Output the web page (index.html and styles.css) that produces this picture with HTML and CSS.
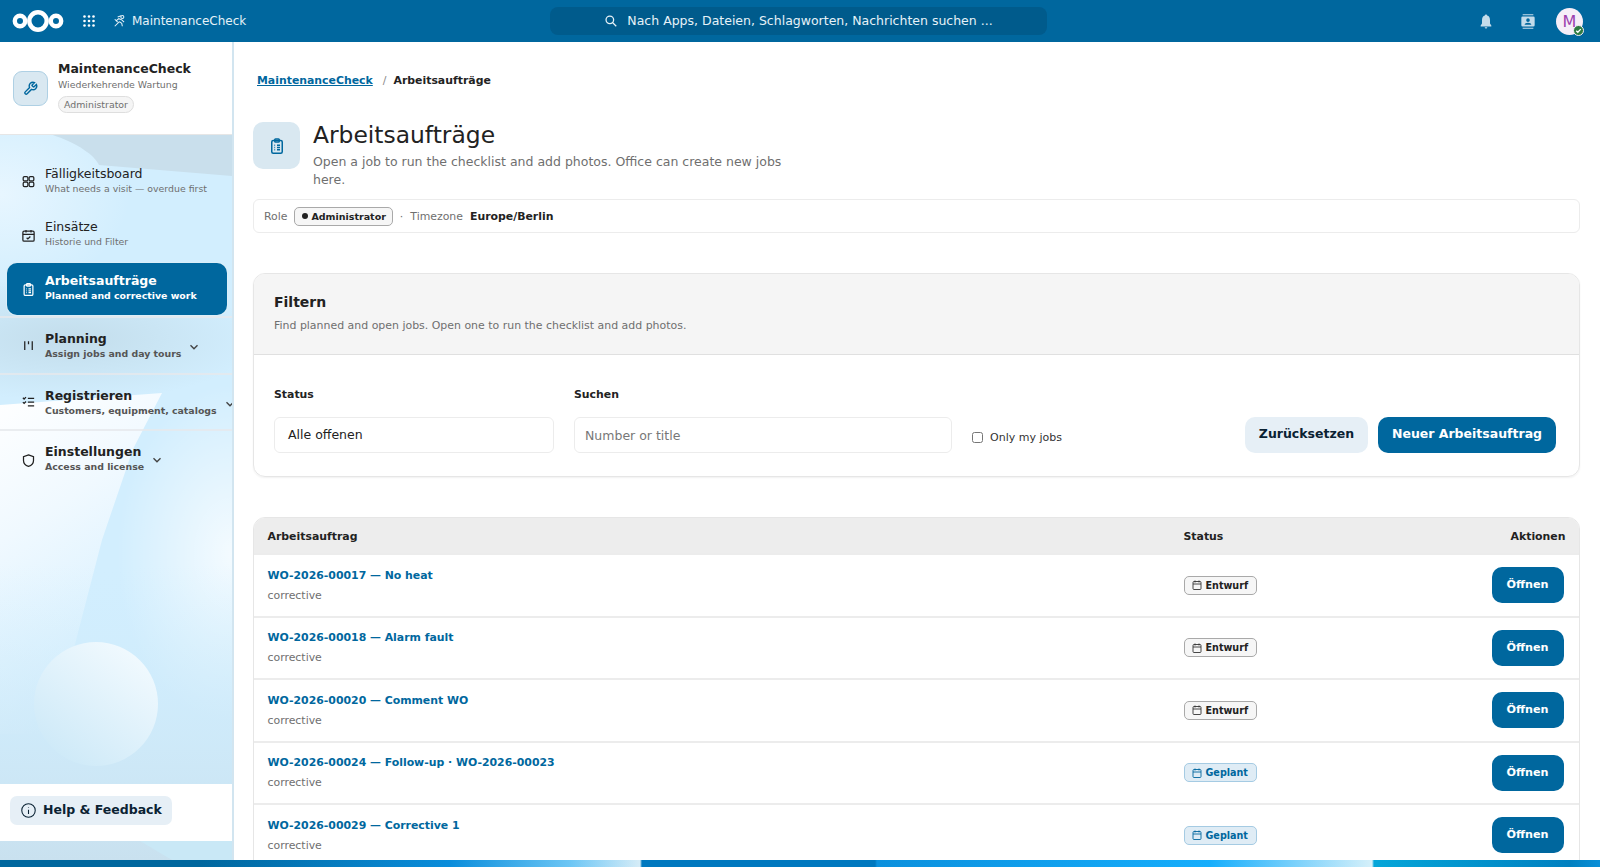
FILE: index.html
```html
<!DOCTYPE html>
<html lang="de">
<head>
  <meta charset="UTF-8">
  <meta name="viewport" content="width=device-width, initial-scale=1.0">
  <title>Arbeitsaufträge - MaintenanceCheck</title>
  <link rel="stylesheet" href="styles.css">
</head>
<body>

  <!-- shared icons -->
  <svg class="sprite" aria-hidden="true">
    <symbol id="i-cal" viewBox="0 0 24 24">
      <rect x="4" y="5" width="16" height="16" rx="2"/>
      <path d="M8 3v4M16 3v4M4 10h16"/>
    </symbol>
    <symbol id="i-clip" viewBox="0 0 24 24">
      <rect x="5" y="4.5" width="14" height="17" rx="2"/>
      <rect x="9" y="2.5" width="6" height="4" rx="1"/>
      <path d="M8.5 11h1M12 11h4M8.5 14h1M12 14h4M8.5 17h1M12 17h4"/>
    </symbol>
    <symbol id="i-chev" viewBox="0 0 24 24">
      <path d="M6 9l6 6 6-6"/>
    </symbol>
  </svg>

  <header class="topbar">
    <div class="topbar-left">
      <svg class="logo" viewBox="0 0 52 24">
        <circle cx="8" cy="12" r="5.2"/>
        <circle cx="26" cy="12" r="8.7"/>
        <circle cx="44" cy="12" r="5.2"/>
      </svg>
      <svg class="apps" viewBox="0 0 12 12">
        <circle cx="1.5" cy="1.5" r="1.3"/><circle cx="6" cy="1.5" r="1.3"/><circle cx="10.5" cy="1.5" r="1.3"/>
        <circle cx="1.5" cy="6" r="1.3"/><circle cx="6" cy="6" r="1.3"/><circle cx="10.5" cy="6" r="1.3"/>
        <circle cx="1.5" cy="10.5" r="1.3"/><circle cx="6" cy="10.5" r="1.3"/><circle cx="10.5" cy="10.5" r="1.3"/>
      </svg>
      <div class="app-name">
        <svg class="app-icon" viewBox="0 0 24 24">
          <circle cx="16" cy="5" r="2.6"/>
          <path d="M3 21l8-8M5 12l5-4 5 2 4 4M11 13l4 3 1 5M14 3L8 5M3 9l5 5"/>
        </svg>
        <span>MaintenanceCheck</span>
      </div>
    </div>
    <div class="search">
      <svg class="search-icon" viewBox="0 0 24 24">
        <circle cx="10" cy="10" r="6.5"/>
        <path d="M15 15l6 6"/>
      </svg>
      <span>Nach Apps, Dateien, Schlagworten, Nachrichten suchen ...</span>
    </div>
    <div class="topbar-right">
      <svg class="top-icon" viewBox="0 0 24 24">
        <path d="M12 1.500c-1 0-1.600.7-1.700 1.600C7.500 3.900 6 6.500 6 10v5l-2 3v1.500h16V18l-2-3v-5c0-3.500-1.500-6.100-4.300-6.900C13.600 2.200 13 1.500 12 1.500z"/>
        <path d="M10 20.500a2 2 0 0 0 4 0z"/>
      </svg>
      <svg class="top-icon" viewBox="0 0 24 24">
        <path d="M4 1h16v1.800H4zM4 21.200h16V23H4z"/>
        <path fill-rule="evenodd" d="M4 4.500h16a2 2 0 0 1 2 2v11a2 2 0 0 1-2 2H4a2 2 0 0 1-2-2v-11a2 2 0 0 1 2-2zm8 2.800a2.700 2.700 0 1 0 0 5.400 2.700 2.700 0 0 0 0-5.400zM7 17h10c0-2-2.200-3.200-5-3.200S7 15 7 17z"/>
      </svg>
      <div class="avatar">
        M
        <span class="status-dot">
          <svg viewBox="0 0 12 12"><path d="M3 6.200l2.100 2.100L9 4.200"/></svg>
        </span>
      </div>
    </div>
  </header>

  <div class="app">
    <aside class="sidebar">
      <!-- background picture behind the nav -->
      <svg class="side-bg" viewBox="0 0 232 726" preserveAspectRatio="none">
        <defs>
          <linearGradient id="sheet" x1="0" y1="0" x2="0.3" y2="1">
            <stop offset="0" stop-color="#ffffff"/>
            <stop offset="0.4" stop-color="#f0f9ff"/>
            <stop offset="1" stop-color="#d2eefe"/>
          </linearGradient>
          <linearGradient id="ball" x1="0.2" y1="0.9" x2="0.8" y2="0.1">
            <stop offset="0" stop-color="#cfeaf8"/>
            <stop offset="1" stop-color="#f0f9fe"/>
          </linearGradient>
          <linearGradient id="low" x1="0" y1="0" x2="0" y2="1">
            <stop offset="0" stop-color="#cfeefe" stop-opacity="0"/>
            <stop offset="1" stop-color="#c9e1ef"/>
          </linearGradient>
          <radialGradient id="shade">
            <stop offset="0" stop-color="#c2dcea" stop-opacity="0.95"/>
            <stop offset="1" stop-color="#c2dcea" stop-opacity="0"/>
          </radialGradient>
          <radialGradient id="blob">
            <stop offset="0" stop-color="#eaf7ff" stop-opacity="0.9"/>
            <stop offset="1" stop-color="#eaf7ff" stop-opacity="0"/>
          </radialGradient>
          <radialGradient id="glow">
            <stop offset="0" stop-color="#ffffff" stop-opacity="0.75"/>
            <stop offset="1" stop-color="#ffffff" stop-opacity="0"/>
          </radialGradient>
        </defs>
        <rect width="232" height="726" fill="#d2eefe"/>
        <ellipse cx="0" cy="60" rx="130" ry="100" fill="url(#blob)"/>
        <path d="M50 0C80 10 95 22 99 31L232 42V0z" fill="#c9dfec"/>
        <ellipse cx="70" cy="205" rx="190" ry="62" fill="url(#shade)"/>
        <ellipse cx="232" cy="420" rx="115" ry="170" fill="url(#glow)"/>
        <path d="M0 271L162 259 133 315 102 406 73 518 55 600H0z" fill="url(#sheet)"/>
        <rect y="430" width="232" height="296" fill="url(#low)"/>
        <circle cx="96" cy="570" r="62" fill="url(#ball)"/>
        <path d="M140 707H232V726H172z" fill="#c9e8f6"/>
      </svg>

      <div class="side-head">
        <div class="side-logo">
          <svg viewBox="0 0 24 24">
            <path d="M14.700 6.300a1 1 0 0 0 0 1.400l1.600 1.600a1 1 0 0 0 1.400 0l3.770-3.770a6 6 0 0 1-7.940 7.940l-6.910 6.910a2.120 2.120 0 0 1-3-3l6.910-6.910a6 6 0 0 1 7.940-7.940l-3.760 3.760z"/>
          </svg>
        </div>
        <div class="side-info">
          <strong>MaintenanceCheck</strong>
          <span>Wiederkehrende Wartung</span>
          <em class="role-pill">Administrator</em>
        </div>
      </div>

      <nav class="side-nav">
        <a class="nav-item low" href="#">
          <svg class="nav-icon" viewBox="0 0 24 24">
            <rect x="3.500" y="4" width="7.500" height="7" rx="2"/><rect x="13" y="4" width="7.500" height="7" rx="2"/>
            <rect x="3.500" y="13" width="7.500" height="7" rx="2"/><rect x="13" y="13" width="7.500" height="7" rx="2"/>
          </svg>
          <span class="nav-text"><b>Fälligkeitsboard</b><small>What needs a visit — overdue first</small></span>
        </a>
        <a class="nav-item low" href="#">
          <svg class="nav-icon" viewBox="0 0 24 24">
            <rect x="3" y="5" width="18" height="16" rx="2"/>
            <path d="M8 3v4M16 3v4M3 10h18M9 15.500l2 2 4-4"/>
          </svg>
          <span class="nav-text"><b>Einsätze</b><small>Historie und Filter</small></span>
        </a>
        <a class="nav-item active" href="#">
          <svg class="nav-icon"><use href="#i-clip"/></svg>
          <span class="nav-text"><b>Arbeitsaufträge</b><small>Planned and corrective work</small></span>
        </a>
        <a class="nav-item group" href="#">
          <svg class="nav-icon" viewBox="0 0 24 24"><path d="M6 5v14M12 5v5M18 5v14"/></svg>
          <span class="nav-text"><b>Planning</b><small>Assign jobs and day tours</small></span>
          <svg class="chev"><use href="#i-chev"/></svg>
        </a>
        <a class="nav-item group" href="#">
          <svg class="nav-icon" viewBox="0 0 24 24"><path d="M3 6l2 2 3-3M3 13l2 2 3-3M11 7h10M11 13h10M11 19h10"/></svg>
          <span class="nav-text"><b>Registrieren</b><small>Customers, equipment, catalogs</small></span>
          <svg class="chev"><use href="#i-chev"/></svg>
        </a>
        <a class="nav-item group low" href="#">
          <svg class="nav-icon" viewBox="0 0 24 24"><path d="M12 3l8 3v6c0 5-3.500 8-8 9.500C7.500 20 4 17 4 12V6z"/></svg>
          <span class="nav-text"><b>Einstellungen</b><small>Access and license</small></span>
          <svg class="chev"><use href="#i-chev"/></svg>
        </a>
      </nav>

      <div class="side-foot">
        <a class="help-btn" href="#">
          <svg viewBox="0 0 24 24"><circle cx="12" cy="12" r="9.500"/><path d="M12 11v6M12 7.500v.5"/></svg>
          <span>Help &amp; Feedback</span>
        </a>
      </div>
    </aside>

    <main class="content">
      <div class="crumbs">
        <a href="#">MaintenanceCheck</a>
        <span class="sep">/</span>
        <strong>Arbeitsaufträge</strong>
      </div>

      <div class="page-head">
        <div class="page-icon"><svg><use href="#i-clip"/></svg></div>
        <div class="page-title">
          <h1>Arbeitsaufträge</h1>
          <p>Open a job to run the checklist and add photos. Office can create new jobs here.</p>
        </div>
      </div>

      <div class="context-bar">
        <span class="muted">Role</span>
        <span class="role-badge"><i></i>Administrator</span>
        <span class="muted dot">·</span>
        <span class="muted">Timezone</span>
        <strong>Europe/Berlin</strong>
      </div>

      <section class="card">
        <div class="card-head">
          <h2>Filtern</h2>
          <p>Find planned and open jobs. Open one to run the checklist and add photos.</p>
        </div>
        <form class="filters">
          <div class="field field-status">
            <label for="status">Status</label>
            <div class="select" id="status">Alle offenen</div>
          </div>
          <div class="field field-search">
            <label for="search">Suchen</label>
            <input id="search" type="text" placeholder="Number or title">
          </div>
          <label class="check"><input type="checkbox"> Only my jobs</label>
          <div class="filter-btns">
            <button type="button" class="btn btn-soft">Zurücksetzen</button>
            <button type="button" class="btn btn-main">Neuer Arbeitsauftrag</button>
          </div>
        </form>
      </section>

      <section class="jobs">
        <div class="row row-head">
          <span>Arbeitsauftrag</span>
          <span>Status</span>
          <span class="right">Aktionen</span>
        </div>
        <div class="row">
          <div class="job"><a href="#">WO-2026-00017 — No heat</a><span>corrective</span></div>
          <div><span class="badge"><svg><use href="#i-cal"/></svg>Entwurf</span></div>
          <div class="right"><a class="open-btn" href="#">Öffnen</a></div>
        </div>
        <div class="row">
          <div class="job"><a href="#">WO-2026-00018 — Alarm fault</a><span>corrective</span></div>
          <div><span class="badge"><svg><use href="#i-cal"/></svg>Entwurf</span></div>
          <div class="right"><a class="open-btn" href="#">Öffnen</a></div>
        </div>
        <div class="row">
          <div class="job"><a href="#">WO-2026-00020 — Comment WO</a><span>corrective</span></div>
          <div><span class="badge"><svg><use href="#i-cal"/></svg>Entwurf</span></div>
          <div class="right"><a class="open-btn" href="#">Öffnen</a></div>
        </div>
        <div class="row">
          <div class="job"><a href="#">WO-2026-00024 — Follow-up · WO-2026-00023</a><span>corrective</span></div>
          <div><span class="badge planned"><svg><use href="#i-cal"/></svg>Geplant</span></div>
          <div class="right"><a class="open-btn" href="#">Öffnen</a></div>
        </div>
        <div class="row">
          <div class="job"><a href="#">WO-2026-00029 — Corrective 1</a><span>corrective</span></div>
          <div><span class="badge planned"><svg><use href="#i-cal"/></svg>Geplant</span></div>
          <div class="right"><a class="open-btn" href="#">Öffnen</a></div>
        </div>
      </section>
    </main>
  </div>

  <div class="strip"></div>

</body>
</html>
```

FILE: styles.css
```css
* {
  box-sizing: border-box;
}

body {
  margin: 0;
  height: 100vh;
  overflow: hidden;
  display: flex;
  flex-direction: column;
  font-family: "DejaVu Sans", sans-serif;
  color: #222222;
  background: #ffffff;
}

a {
  text-decoration: none;
  color: inherit;
}

.sprite {
  display: none;
}

/* Top bar */
.topbar {
  flex: 0 0 42px;
  display: grid;
  grid-template-columns: 1fr 497px 1fr;
  align-items: center;
  background: #00679e;
  color: #ffffff;
  padding: 0 15px 0 12px;
}

.topbar-left {
  display: flex;
  align-items: center;
}

.logo {
  width: 52px;
  height: 24px;
  fill: none;
  stroke: #ffffff;
  stroke-width: 4.4;
}

.apps {
  width: 12px;
  height: 12px;
  margin-left: 19px;
  fill: #ffffff;
}

.app-name {
  display: flex;
  align-items: center;
  gap: 5px;
  margin-left: 18px;
  font-size: 12px;
  color: #e6f2f8;
}

.app-icon {
  width: 14px;
  height: 14px;
  fill: none;
  stroke: #e6f2f8;
  stroke-width: 1.8;
}

.search {
  height: 28px;
  border-radius: 8px;
  background: #005b8c;
  display: flex;
  align-items: center;
  justify-content: center;
  gap: 9px;
  font-size: 12.5px;
  color: #e6f2f8;
}

.search span {
  margin-top: -1px;
}

.search-icon {
  width: 14px;
  height: 14px;
  fill: none;
  stroke: #e6f2f8;
  stroke-width: 2.2;
}

.topbar-right {
  display: flex;
  align-items: center;
  justify-content: flex-end;
  gap: 26px;
  padding-right: 2px;
}

.top-icon {
  width: 16px;
  height: 17px;
  fill: #c4dcea;
}

.avatar {
  position: relative;
  width: 27px;
  height: 27px;
  margin-left: -6px;
  border-radius: 50%;
  background: #f6eef8;
  color: #9c3fae;
  font-size: 16px;
  line-height: 27px;
  text-align: center;
}

.status-dot {
  position: absolute;
  right: -1px;
  bottom: -1px;
  width: 11px;
  height: 11px;
  border-radius: 50%;
  background: #2d7b41;
  border: 1px solid #f6eef8;
}

.status-dot svg {
  display: block;
  width: 9px;
  height: 9px;
  fill: none;
  stroke: #ffffff;
  stroke-width: 1.8;
}

/* Page body */
.app {
  flex: 1;
  min-height: 0;
  display: flex;
}

.sidebar {
  position: relative;
  flex: 0 0 234px;
  display: flex;
  flex-direction: column;
  border-right: 2px solid #d2e5f0;
  overflow: hidden;
}

.side-bg {
  position: absolute;
  left: 0;
  top: 92px;
  width: 232px;
  height: 726px;
}

.side-head {
  position: relative;
  flex: 0 0 93px;
  background: #ffffff;
  border-bottom: 1px solid #e6e6e6;
  display: flex;
  align-items: flex-start;
  padding: 18px 0 0 13px;
  gap: 10px;
}

.side-logo {
  flex: 0 0 35px;
  height: 35px;
  margin-top: 11px;
  border-radius: 9px;
  background: #d9e8f1;
  border: 1px solid #aed0e4;
  display: flex;
  align-items: center;
  justify-content: center;
}

.side-logo svg {
  width: 15px;
  height: 15px;
  fill: none;
  stroke: #00679e;
  stroke-width: 2.2;
}

.side-info {
  display: flex;
  flex-direction: column;
  align-items: flex-start;
}

.side-info strong {
  font-size: 12.5px;
  line-height: 17px;
}

.side-info span {
  font-size: 9.4px;
  line-height: 14px;
  margin-top: 1px;
  color: #6f6f6f;
}

.role-pill {
  margin-top: 4px;
  padding: 0 5px;
  height: 17px;
  border: 1px solid #dedede;
  border-radius: 9px;
  background: #f5f5f5;
  font-size: 9.4px;
  line-height: 15px;
  font-style: normal;
  color: #6f6f6f;
}

.side-nav {
  position: relative;
  flex: 1;
  padding-top: 18px;
  display: flex;
  flex-direction: column;
}

.nav-item {
  display: flex;
  align-items: center;
  height: 53.5px;
  padding-left: 21px;
  color: #222222;
}

.nav-icon {
  flex: 0 0 15px;
  width: 15px;
  height: 15px;
  margin-right: 9px;
  fill: none;
  stroke: #222222;
  stroke-width: 2;
}

.nav-item.low .nav-icon {
  margin-top: 4px;
}

.nav-text {
  display: flex;
  flex-direction: column;
  white-space: nowrap;
}

.nav-text b {
  font-size: 12.5px;
  line-height: 17px;
  font-weight: 400;
}

.nav-text small {
  font-size: 9.4px;
  line-height: 13px;
  color: #6f6f6f;
}

.nav-item.active {
  margin: 3px 5px 0 7px;
  padding: 0 0 5px 14px;
  height: 52px;
  border-radius: 10px;
  background: #00679e;
  color: #ffffff;
  box-shadow: 0 0 0 1px #dbeef8;
}

.nav-item.active .nav-icon {
  stroke: #ffffff;
  margin-top: 5px;
}

.nav-item.active b,
.nav-item.group b {
  font-weight: 700;
}

.nav-item.active small,
.nav-item.group small {
  font-weight: 700;
}

.nav-item.active small {
  color: #ffffff;
}

.nav-item.group {
  height: 56.6px;
  border-top: 2px solid rgba(230, 233, 236, 0.8);
}

.nav-item.active + .nav-item.group {
  margin-top: 1px;
}

.nav-item.group small {
  color: #555555;
}

.chev {
  flex: 0 0 14px;
  width: 14px;
  height: 14px;
  margin: 4px 0 0 6px;
  fill: none;
  stroke: #444444;
  stroke-width: 2.4;
}

.side-foot {
  position: relative;
  flex: 0 0 57px;
  margin-bottom: 19px;
  background: #ffffff;
  padding: 12px 10px;
}

.help-btn {
  display: inline-flex;
  align-items: center;
  gap: 6px;
  height: 29px;
  padding: 0 10px;
  border-radius: 7px;
  background: #e6eff6;
  color: #0a2233;
  font-size: 12.5px;
  font-weight: 700;
}

.help-btn span {
  margin-top: -2px;
}

.help-btn svg {
  width: 17px;
  height: 17px;
  fill: none;
  stroke: #0a2233;
  stroke-width: 1.5;
}

/* Main column */
.content {
  flex: 1;
  min-width: 0;
  overflow: hidden;
  padding: 0 20px 0 19px;
}

.crumbs {
  display: flex;
  align-items: center;
  margin: 32px 0 0 4px;
  font-size: 10.9px;
  line-height: 14px;
  font-weight: 700;
}

.crumbs a {
  color: #00679e;
  text-decoration: underline;
}

.crumbs .sep {
  margin: 0 7px 0 10px;
  font-weight: 400;
  color: #8a8a8a;
}

.page-head {
  display: flex;
  gap: 13px;
  margin-top: 34px;
}

.page-icon {
  flex: 0 0 47px;
  height: 47px;
  border-radius: 10px;
  background: #d9e8f1;
  display: flex;
  align-items: center;
  justify-content: center;
}

.page-icon svg {
  width: 18px;
  height: 18px;
  fill: none;
  stroke: #00679e;
  stroke-width: 2;
}

.page-title h1 {
  margin: 0;
  font-size: 23.4px;
  line-height: 26px;
  font-weight: 400;
}

.page-title p {
  margin: 5px 0 0;
  max-width: 490px;
  font-size: 12.5px;
  line-height: 18px;
  color: #6f6f6f;
}

.context-bar {
  display: flex;
  align-items: center;
  height: 34px;
  margin-top: 10px;
  padding: 0 10px;
  gap: 7px;
  border: 1px solid #ececec;
  border-radius: 6px;
  font-size: 10.9px;
}

.muted {
  color: #6f6f6f;
}

.role-badge {
  display: inline-flex;
  align-items: center;
  gap: 3px;
  height: 19px;
  padding: 0 6px 0 7px;
  border: 1px solid #a9a9a9;
  border-radius: 5px;
  background: #f6f6f6;
  font-size: 9.5px;
  font-weight: 700;
}

.role-badge i {
  width: 6px;
  height: 6px;
  border-radius: 50%;
  background: #222222;
}

.card {
  margin-top: 40px;
  height: 204px;
  border: 1px solid #e6e6e6;
  border-radius: 12px;
  overflow: hidden;
  box-shadow: 0 1px 2px rgba(0, 0, 0, 0.06);
}

.card-head {
  height: 81px;
  padding: 19px 20px 0;
  background: #f5f5f5;
  border-bottom: 1px solid #e0e0e0;
}

.card-head h2 {
  margin: 0;
  font-size: 14px;
  line-height: 18px;
  font-weight: 700;
}

.card-head p {
  margin: 8px 0 0;
  font-size: 10.95px;
  line-height: 14px;
  color: #6f6f6f;
}

.filters {
  display: flex;
  align-items: flex-end;
  padding: 33px 23px 0 20px;
}

.field {
  display: flex;
  flex-direction: column;
}

.field label {
  font-size: 10.9px;
  line-height: 14px;
  font-weight: 700;
  margin-bottom: 15px;
}

.field-status {
  flex: 0 0 280px;
  margin-right: 20px;
}

.field-search {
  flex: 0 0 378px;
}

.select,
.field input {
  height: 36px;
  border: 1px solid #ececec;
  border-radius: 6px;
  background: #ffffff;
  font-family: inherit;
  font-size: 12.5px;
  color: #222222;
  line-height: 34px;
}

.select {
  padding-left: 13px;
}

.field input {
  padding: 0 10px;
}

.field input::placeholder {
  color: #777777;
}

.check {
  display: flex;
  align-items: center;
  gap: 7px;
  height: 20px;
  margin: 0 0 6px 20px;
  font-size: 11px;
  color: #333333;
}

.check input {
  width: 11px;
  height: 11px;
  margin: 0;
}

.filter-btns {
  margin-left: auto;
  display: flex;
  gap: 10px;
}

.btn {
  height: 36px;
  padding: 0 0 3px;
  border: 0;
  border-radius: 10px;
  font-family: inherit;
  font-size: 12.5px;
  font-weight: 700;
}

.btn-soft {
  width: 123px;
  background: #e6eff6;
  color: #0a2233;
}

.btn-main {
  width: 178px;
  background: #00679e;
  color: #ffffff;
}

/* Job table */
.jobs {
  margin-top: 40px;
  border: 1px solid #e6e6e6;
  border-radius: 12px 12px 0 0;
  overflow: hidden;
}

.row {
  display: grid;
  grid-template-columns: 1fr 288px 92px;
  align-items: center;
  height: 62.5px;
  padding-left: 13.5px;
  padding-right: 15.5px;
  border-top: 2px solid #ececec;
}

.row-head {
  height: 35px;
  padding-top: 2px;
  border-top: 0;
  background: #ededed;
  font-size: 10.9px;
  font-weight: 700;
}

.row-head .right {
  margin-right: -2px;
}

.right {
  text-align: right;
}

.job {
  display: flex;
  flex-direction: column;
  gap: 6px;
  padding-top: 1px;
}

.job a {
  font-size: 10.9px;
  line-height: 14px;
  font-weight: 700;
  color: #00679e;
}

.job span {
  font-size: 10.9px;
  line-height: 14px;
  color: #6f6f6f;
}

.badge {
  display: inline-flex;
  align-items: center;
  gap: 3px;
  width: 73px;
  height: 19px;
  padding-left: 6px;
  border: 1px solid #a9a9a9;
  border-radius: 5px;
  background: #f6f6f6;
  font-size: 9.6px;
  font-weight: 700;
}

.badge svg {
  width: 12px;
  height: 12px;
  fill: none;
  stroke: #333333;
  stroke-width: 1.8;
}

.badge.planned {
  border-color: #a5cbe3;
  background: #dfecf5;
  color: #00679e;
}

.badge.planned svg {
  stroke: #00679e;
}

.open-btn {
  display: inline-block;
  width: 72px;
  height: 36px;
  border-radius: 10px;
  background: #00679e;
  color: #ffffff;
  font-size: 11.2px;
  line-height: 35px;
  font-weight: 700;
  text-align: center;
}

/* Wallpaper strip at the very bottom */
.strip {
  flex: 0 0 7px;
  background: linear-gradient(90deg, #00679e 0, #00679e 200px, #0a8ddb 450px, #6cc6f5 570px, #d5ecf7 640px, #0078bf 642px, #0078bf 875px, #0b90dd 877px, #16aefc 1210px, #d5f0fa 1372px, #05a6d9 1374px, #0080c0 1570px, #0a8fd8 1600px);
}
```
